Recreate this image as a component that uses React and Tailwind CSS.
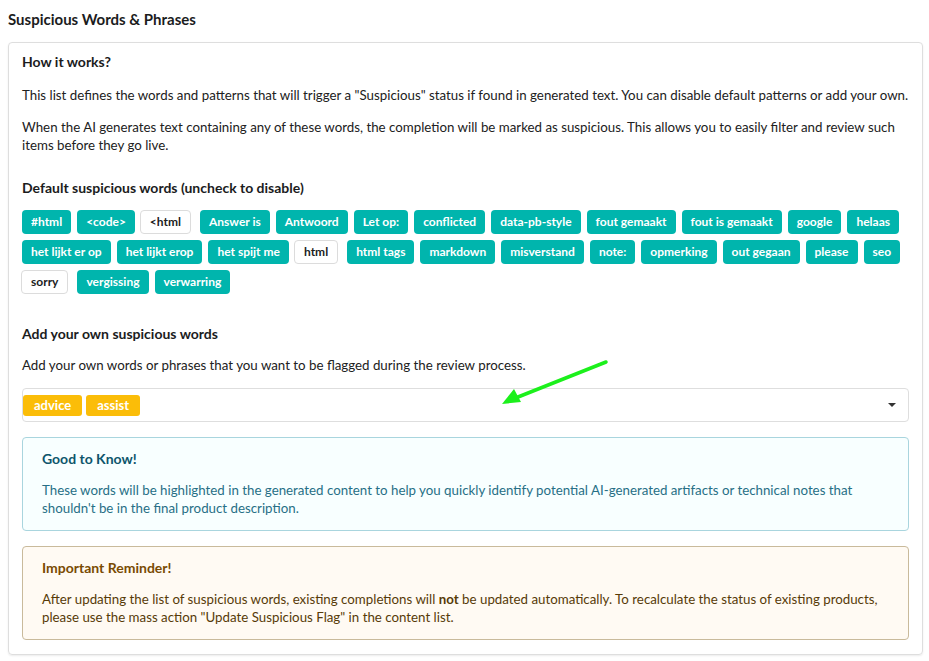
import React from 'react';

const rows = [
  [
    { w: '#html', on: true },
    { w: '<code>', on: true },
    { w: '<html', on: false },
    { w: 'Answer is', on: true },
    { w: 'Antwoord', on: true },
    { w: 'Let op:', on: true },
    { w: 'conflicted', on: true },
    { w: 'data-pb-style', on: true },
    { w: 'fout gemaakt', on: true },
    { w: 'fout is gemaakt', on: true },
    { w: 'google', on: true },
    { w: 'helaas', on: true },
  ],
  [
    { w: 'het lijkt er op', on: true },
    { w: 'het lijkt erop', on: true },
    { w: 'het spijt me', on: true },
    { w: 'html', on: false },
    { w: 'html tags', on: true },
    { w: 'markdown', on: true },
    { w: 'misverstand', on: true },
    { w: 'note:', on: true },
    { w: 'opmerking', on: true },
    { w: 'out gegaan', on: true },
    { w: 'please', on: true },
    { w: 'seo', on: true },
  ],
  [
    { w: 'sorry', on: false },
    { w: 'vergissing', on: true },
    { w: 'verwarring', on: true },
  ],
];

function WordBadge({ word, on }) {
  if (on) {
    return (
      <span className="mr-[6px] inline-flex h-[24px] shrink-0 items-center rounded-[4px] bg-[#00b5ad] px-[9px] text-[12px] font-bold text-white">
        {word}
      </span>
    );
  }
  return (
    <span className="-ml-[1px] mr-[9px] inline-flex h-[24px] shrink-0 items-center rounded-[4px] border border-[#dcdcdc] bg-white px-[9px] text-[12px] font-bold text-[#1b1c1d]">
      {word}
    </span>
  );
}

export default function App() {
  return (
    <div className="relative min-h-[661px] bg-white font-['Lato',sans-serif] text-[13.3px] leading-[18px] text-[#212121]">
      <h1 className="px-2 pt-[10px] pb-[14px] text-[15px] font-bold leading-[18px] text-[#1b1c1d]">
        Suspicious Words &amp; Phrases
      </h1>

      <div className="ml-2 mr-[6px] rounded-[4px] border border-[#dedede] px-[13px] pt-[10px] pb-[14px] shadow-[0_1px_2px_rgba(0,0,0,0.08)]">
        <h2 className="text-[14px] font-bold text-[#1b1c1d]">How it works?</h2>
        <p className="mt-[15px]">
          This list defines the words and patterns that will trigger a "Suspicious" status if found in generated text. You can disable default patterns or add your own.
        </p>
        <p className="mt-[14px]">
          When the AI generates text containing any of these words, the completion will be marked as suspicious. This allows you to easily filter and review such items before they go live.
        </p>

        <h3 className="mt-[25px] text-[14px] font-bold text-[#1b1c1d]">Default suspicious words (uncheck to disable)</h3>
        <div className="mt-[13px] flex flex-col gap-[6px]">
          {rows.map((row, i) => (
            <div key={i} className="flex">
              {row.map((item) => (
                <WordBadge key={item.w} word={item.w} on={item.on} />
              ))}
            </div>
          ))}
        </div>

        <h3 className="mt-[31px] text-[14px] font-bold text-[#1b1c1d]">Add your own suspicious words</h3>
        <p className="mt-[13px]">Add your own words or phrases that you want to be flagged during the review process.</p>

        <div className="mt-[14px] flex h-[34px] items-center rounded-[4px] border border-[#dedede] pl-0 pr-[12px]">
          <div className="flex flex-1 gap-[4px]">
            <span className="inline-flex h-[21px] items-center rounded-[3px] bg-[#fbbd08] px-[11px] text-[13px] font-bold text-white">advice</span>
            <span className="inline-flex h-[21px] items-center rounded-[3px] bg-[#fbbd08] px-[11px] text-[13px] font-bold text-white">assist</span>
          </div>
          <span className="h-0 w-0 border-x-[4px] border-t-[4px] border-x-transparent border-t-[#333]" />
        </div>

        <div className="mt-[15px] rounded-[4px] border border-[#a9d5de] bg-[#f8ffff] px-[19px] pt-[12px] pb-[13px] text-[#276f86]">
          <div className="text-[14px] font-bold text-[#0e566c]">Good to Know!</div>
          <p className="mt-[13px]">
            These words will be highlighted in the generated content to help you quickly identify potential AI-generated artifacts or technical notes that shouldn't be in the final product description.
          </p>
        </div>

        <div className="mt-[15px] rounded-[4px] border border-[#c9ba9b] bg-[#fffaf3] px-[19px] pt-[12px] pb-[13px] text-[#573a08]">
          <div className="text-[14px] font-bold text-[#794b02]">Important Reminder!</div>
          <p className="mt-[13px]">
            After updating the list of suspicious words, existing completions will <b>not</b> be updated automatically. To recalculate the status of existing products, please use the mass action "Update Suspicious Flag" in the content list.
          </p>
        </div>
      </div>

      <svg className="pointer-events-none absolute left-0 top-0" width="929" height="661">
        <line x1="606" y1="362" x2="518" y2="397" stroke="#1cf01c" strokeWidth="3.5" strokeLinecap="round" />
        <polygon points="502,404 514,389 521,402" fill="#1cf01c" />
      </svg>
    </div>
  );
}
